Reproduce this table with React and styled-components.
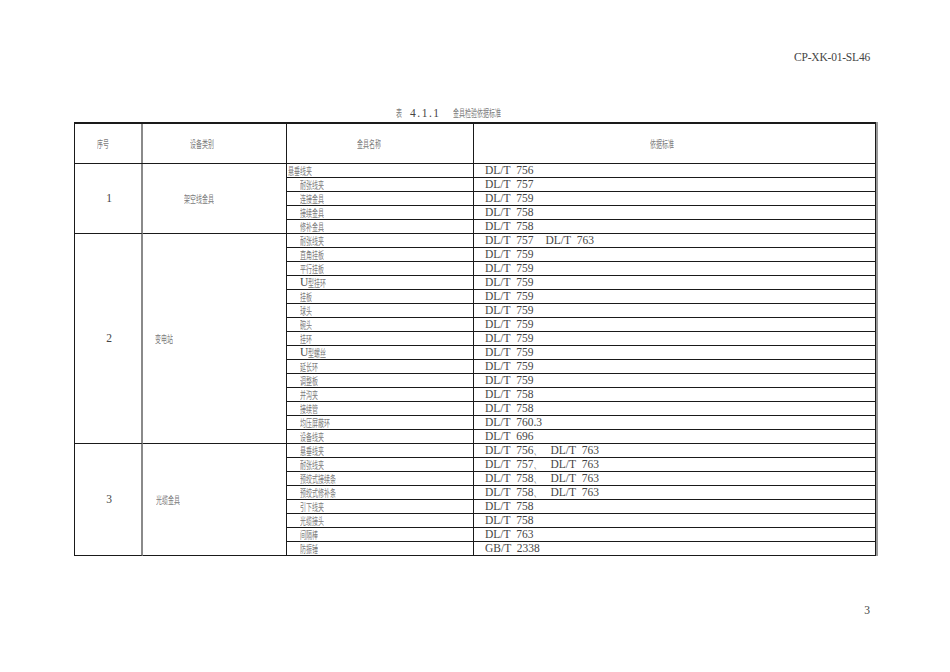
import React from 'react';
import styled, { createGlobalStyle } from 'styled-components';

const Global = createGlobalStyle`
  html, body { margin: 0; padding: 0; background: #fff; }
`;

const Page = styled.div`
  width: 950px;
  height: 672px;
  box-sizing: border-box;
  padding: 50px 0 0 74px;
  display: flex;
  flex-direction: column;
  font-family: "Liberation Serif", "Noto Sans CJK SC", serif;
  font-size: 11.5px;
  color: #454545;
  background: #fff;
`;

const DocCode = styled.div`
  line-height: 14px;
  text-align: right;
  padding-right: 80px;
  letter-spacing: -0.2px;
`;

const Caption = styled.div`
  margin-top: 42px;
  line-height: 14px;
  padding-left: 322px;
  white-space: pre;
`;

const Table = styled.div`
  margin-top: 2px;
  width: 802px;
  box-sizing: border-box;
  border-top: 2px solid #1a1a1a;
  border-left: 1px solid #1a1a1a;
  border-right: 1px solid #1a1a1a;
  box-shadow: 2px 0 0 #9a9a9a;
  display: flex;
  flex-direction: column;
`;

const HeadRow = styled.div`
  display: grid;
  grid-template-columns: 68px 144px 187px 401px;
  height: 40px;
  box-sizing: border-box;
  border-bottom: 1px solid #1a1a1a;
`;

const HeadCell = styled.div`
  display: flex;
  align-items: center;
  padding-left: ${p => p.$pad}px;
  box-sizing: border-box;
  border-right: ${p => (p.$last ? 'none' : p.$gray ? '2px solid #8a8a8a' : '1px solid #1a1a1a')};
`;

const Group = styled.div`
  display: grid;
  grid-template-columns: 68px 144px 588px;
`;

const NumCell = styled.div`
  display: flex;
  align-items: center;
  justify-content: center;
  box-sizing: border-box;
  border-right: 2px solid #8a8a8a;
  border-bottom: 1px solid #1a1a1a;
  padding-left: 2px;
`;

const NameCell = styled.div`
  display: flex;
  align-items: center;
  box-sizing: border-box;
  padding-left: ${p => p.$pad}px;
  border-right: 1px solid #1a1a1a;
  border-bottom: 1px solid #1a1a1a;
`;

const Rows = styled.div`
  display: flex;
  flex-direction: column;
`;

const Row = styled.div`
  display: grid;
  grid-template-columns: 187px 401px;
  height: 14px;
  box-sizing: border-box;
  border-bottom: 1px solid #1a1a1a;
`;

const PartCell = styled.div`
  display: flex;
  align-items: center;
  box-sizing: border-box;
  padding-left: ${p => p.$pad}px;
  border-right: 1px solid #1a1a1a;
`;

const StdCell = styled.div`
  display: flex;
  align-items: center;
  padding-left: 11px;
  word-spacing: 3px;
`;

const Line = styled.span`
  white-space: pre;
  line-height: 13px;
`;

const Seg = styled.span`
  display: inline-block;
  padding-left: ${p => p.$gap}px;
  letter-spacing: ${p => p.$track || 0}px;
`;

const PageNo = styled.div`
  margin-top: 47px;
  line-height: 14px;
  text-align: right;
  padding-right: 80px;
`;

const ZhBox = styled.span`
  display: inline-block;
  width: ${p => p.$n * 6}px;
  white-space: nowrap;
  font-family: "Noto Sans CJK SC", sans-serif;
  font-size: 10px;
  line-height: 13px;
  word-spacing: 0;
  color: #7a7a7a;
  transform: scaleX(0.6);
  transform-origin: 0 50%;
  vertical-align: top;
`;

const Zh = ({ children }) => <ZhBox $n={[...children].length}>{children}</ZhBox>;

const Std = ({ v }) => {
  if (Array.isArray(v)) {
    const [a, b, sep] = v;
    return (
      <Line>
        {a}
        {sep ? (
          <>
            <Seg $gap={1}><Zh>、</Zh></Seg>
            <Seg $gap={10}>{b}</Seg>
          </>
        ) : (
          <Seg $gap={12}>{b}</Seg>
        )}
      </Line>
    );
  }
  return <Line>{v}</Line>;
};

const Part = ({ v }) => {
  if (v.startsWith('U')) {
    return (
      <Line>
        U<Zh>{v.slice(1)}</Zh>
      </Line>
    );
  }
  return (
    <Line>
      <Zh>{v}</Zh>
    </Line>
  );
};

const groups = [
  {
    no: '1',
    name: '架空线金具',
    pad: 41,
    rows: [
      ['悬垂线夹', 'DL/T 756', 1],
      ['耐张线夹', 'DL/T 757'],
      ['连接金具', 'DL/T 759'],
      ['接续金具', 'DL/T 758'],
      ['修补金具', 'DL/T 758'],
    ],
  },
  {
    no: '2',
    name: '变电站',
    pad: 12,
    rows: [
      ['耐张线夹', ['DL/T 757', 'DL/T 763']],
      ['直角挂板', 'DL/T 759'],
      ['平行挂板', 'DL/T 759'],
      ['U型挂环', 'DL/T 759'],
      ['挂板', 'DL/T 759'],
      ['球头', 'DL/T 759'],
      ['碗头', 'DL/T 759'],
      ['挂环', 'DL/T 759'],
      ['U型螺丝', 'DL/T 759'],
      ['延长环', 'DL/T 759'],
      ['调整板', 'DL/T 759'],
      ['并沟夹', 'DL/T 758'],
      ['接续管', 'DL/T 758'],
      ['均压屏蔽环', 'DL/T 760.3'],
      ['设备线夹', 'DL/T 696'],
    ],
  },
  {
    no: '3',
    name: '光缆金具',
    pad: 13,
    rows: [
      ['悬垂线夹', ['DL/T 756', 'DL/T 763', 1]],
      ['耐张线夹', ['DL/T 757', 'DL/T 763', 1]],
      ['预绞式接续条', ['DL/T 758', 'DL/T 763', 1]],
      ['预绞式修补条', ['DL/T 758', 'DL/T 763', 1]],
      ['引下线夹', 'DL/T 758'],
      ['光缆接头', 'DL/T 758'],
      ['间隔棒', 'DL/T 763'],
      ['防振锤', 'GB/T 2338'],
    ],
  },
];

export default function App() {
  return (
    <>
      <Global />
      <Page>
        <DocCode>CP-XK-01-SL46</DocCode>
        <Caption>
          <Zh>表</Zh>
          <Seg $gap={8} $track={1.5}>4.1.1</Seg>
          <Seg $gap={12}><Zh>金具检验依据标准</Zh></Seg>
        </Caption>
        <Table>
          <HeadRow>
            <HeadCell $pad={22} $gray>
              <Line><Zh>序号</Zh></Line>
            </HeadCell>
            <HeadCell $pad={47}>
              <Line><Zh>设备类别</Zh></Line>
            </HeadCell>
            <HeadCell $pad={70}>
              <Line><Zh>金具名称</Zh></Line>
            </HeadCell>
            <HeadCell $pad={176} $last>
              <Line><Zh>依据标准</Zh></Line>
            </HeadCell>
          </HeadRow>
          {groups.map(g => (
            <Group key={g.no}>
              <NumCell>
                <Line>{g.no}</Line>
              </NumCell>
              <NameCell $pad={g.pad}>
                <Line><Zh>{g.name}</Zh></Line>
              </NameCell>
              <Rows>
                {g.rows.map((r, i) => (
                  <Row key={i}>
                    <PartCell $pad={r[2] ? 1 : 13}>
                      <Part v={r[0]} />
                    </PartCell>
                    <StdCell>
                      <Std v={r[1]} />
                    </StdCell>
                  </Row>
                ))}
              </Rows>
            </Group>
          ))}
        </Table>
        <PageNo>3</PageNo>
      </Page>
    </>
  );
}
